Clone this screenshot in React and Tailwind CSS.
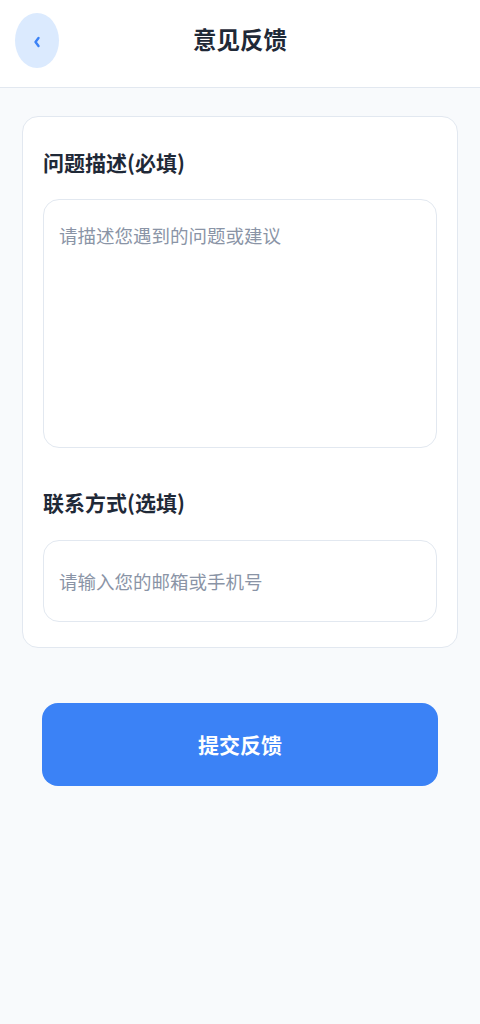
export default function App() {
  const font = { fontFamily: '"Noto Sans CJK SC", "Noto Sans", sans-serif' };
  return (
    <div className="min-h-[1024px] w-full bg-[#f8fafc]" style={font}>
      <header className="relative flex h-[88px] items-center justify-center border-b border-[#e2e8f0] bg-white">
        <button className="absolute left-[15px] top-[13px] flex h-[55px] w-[44px] items-center justify-center rounded-[50%] bg-[#dbeafe]">
          <svg width="8" height="14" viewBox="0 0 8 14" fill="none" className="mt-[3px]">
            <polyline points="5.5,3 2.5,7 5.5,11" stroke="#3b82f6" strokeWidth="2.4" strokeLinecap="round" strokeLinejoin="round" />
          </svg>
        </button>
        <h1 className="-mt-[9px] text-[23.5px] font-bold leading-[30px] text-[#1f2937]">意见反馈</h1>
      </header>

      <main className="px-[22px] pt-[28px]">
        <div className="rounded-[16px] border border-[#e2e8f0] bg-white px-[20px] pb-[25px] pt-[31px]">
          <label className="block text-[21px] font-bold leading-[28px] text-[#1f2937]">问题描述(必填)</label>
          <textarea
            className="mt-[23px] block h-[249px] w-full resize-none rounded-[16px] border border-[#e2e8f0] bg-white px-[15px] pt-[21px] text-[18.5px] leading-[28px] text-[#1f2937] outline-none placeholder:text-[#8a94a6]"
            placeholder="请描述您遇到的问题或建议"
          />
          <label className="mt-[40px] block text-[21px] font-bold leading-[28px] text-[#1f2937]">联系方式(选填)</label>
          <input
            className="mt-[24px] block h-[82px] w-full rounded-[16px] border border-[#e2e8f0] bg-white px-[15px] text-[18.5px] text-[#1f2937] outline-none placeholder:text-[#8a94a6]"
            placeholder="请输入您的邮箱或手机号"
          />
        </div>

        <div className="px-[20px] pt-[55px]">
          <button className="flex h-[83px] w-full items-center justify-center rounded-[16px] bg-[#3b82f6] text-[21px] font-bold text-white">
            提交反馈
          </button>
        </div>
      </main>
    </div>
  );
}
